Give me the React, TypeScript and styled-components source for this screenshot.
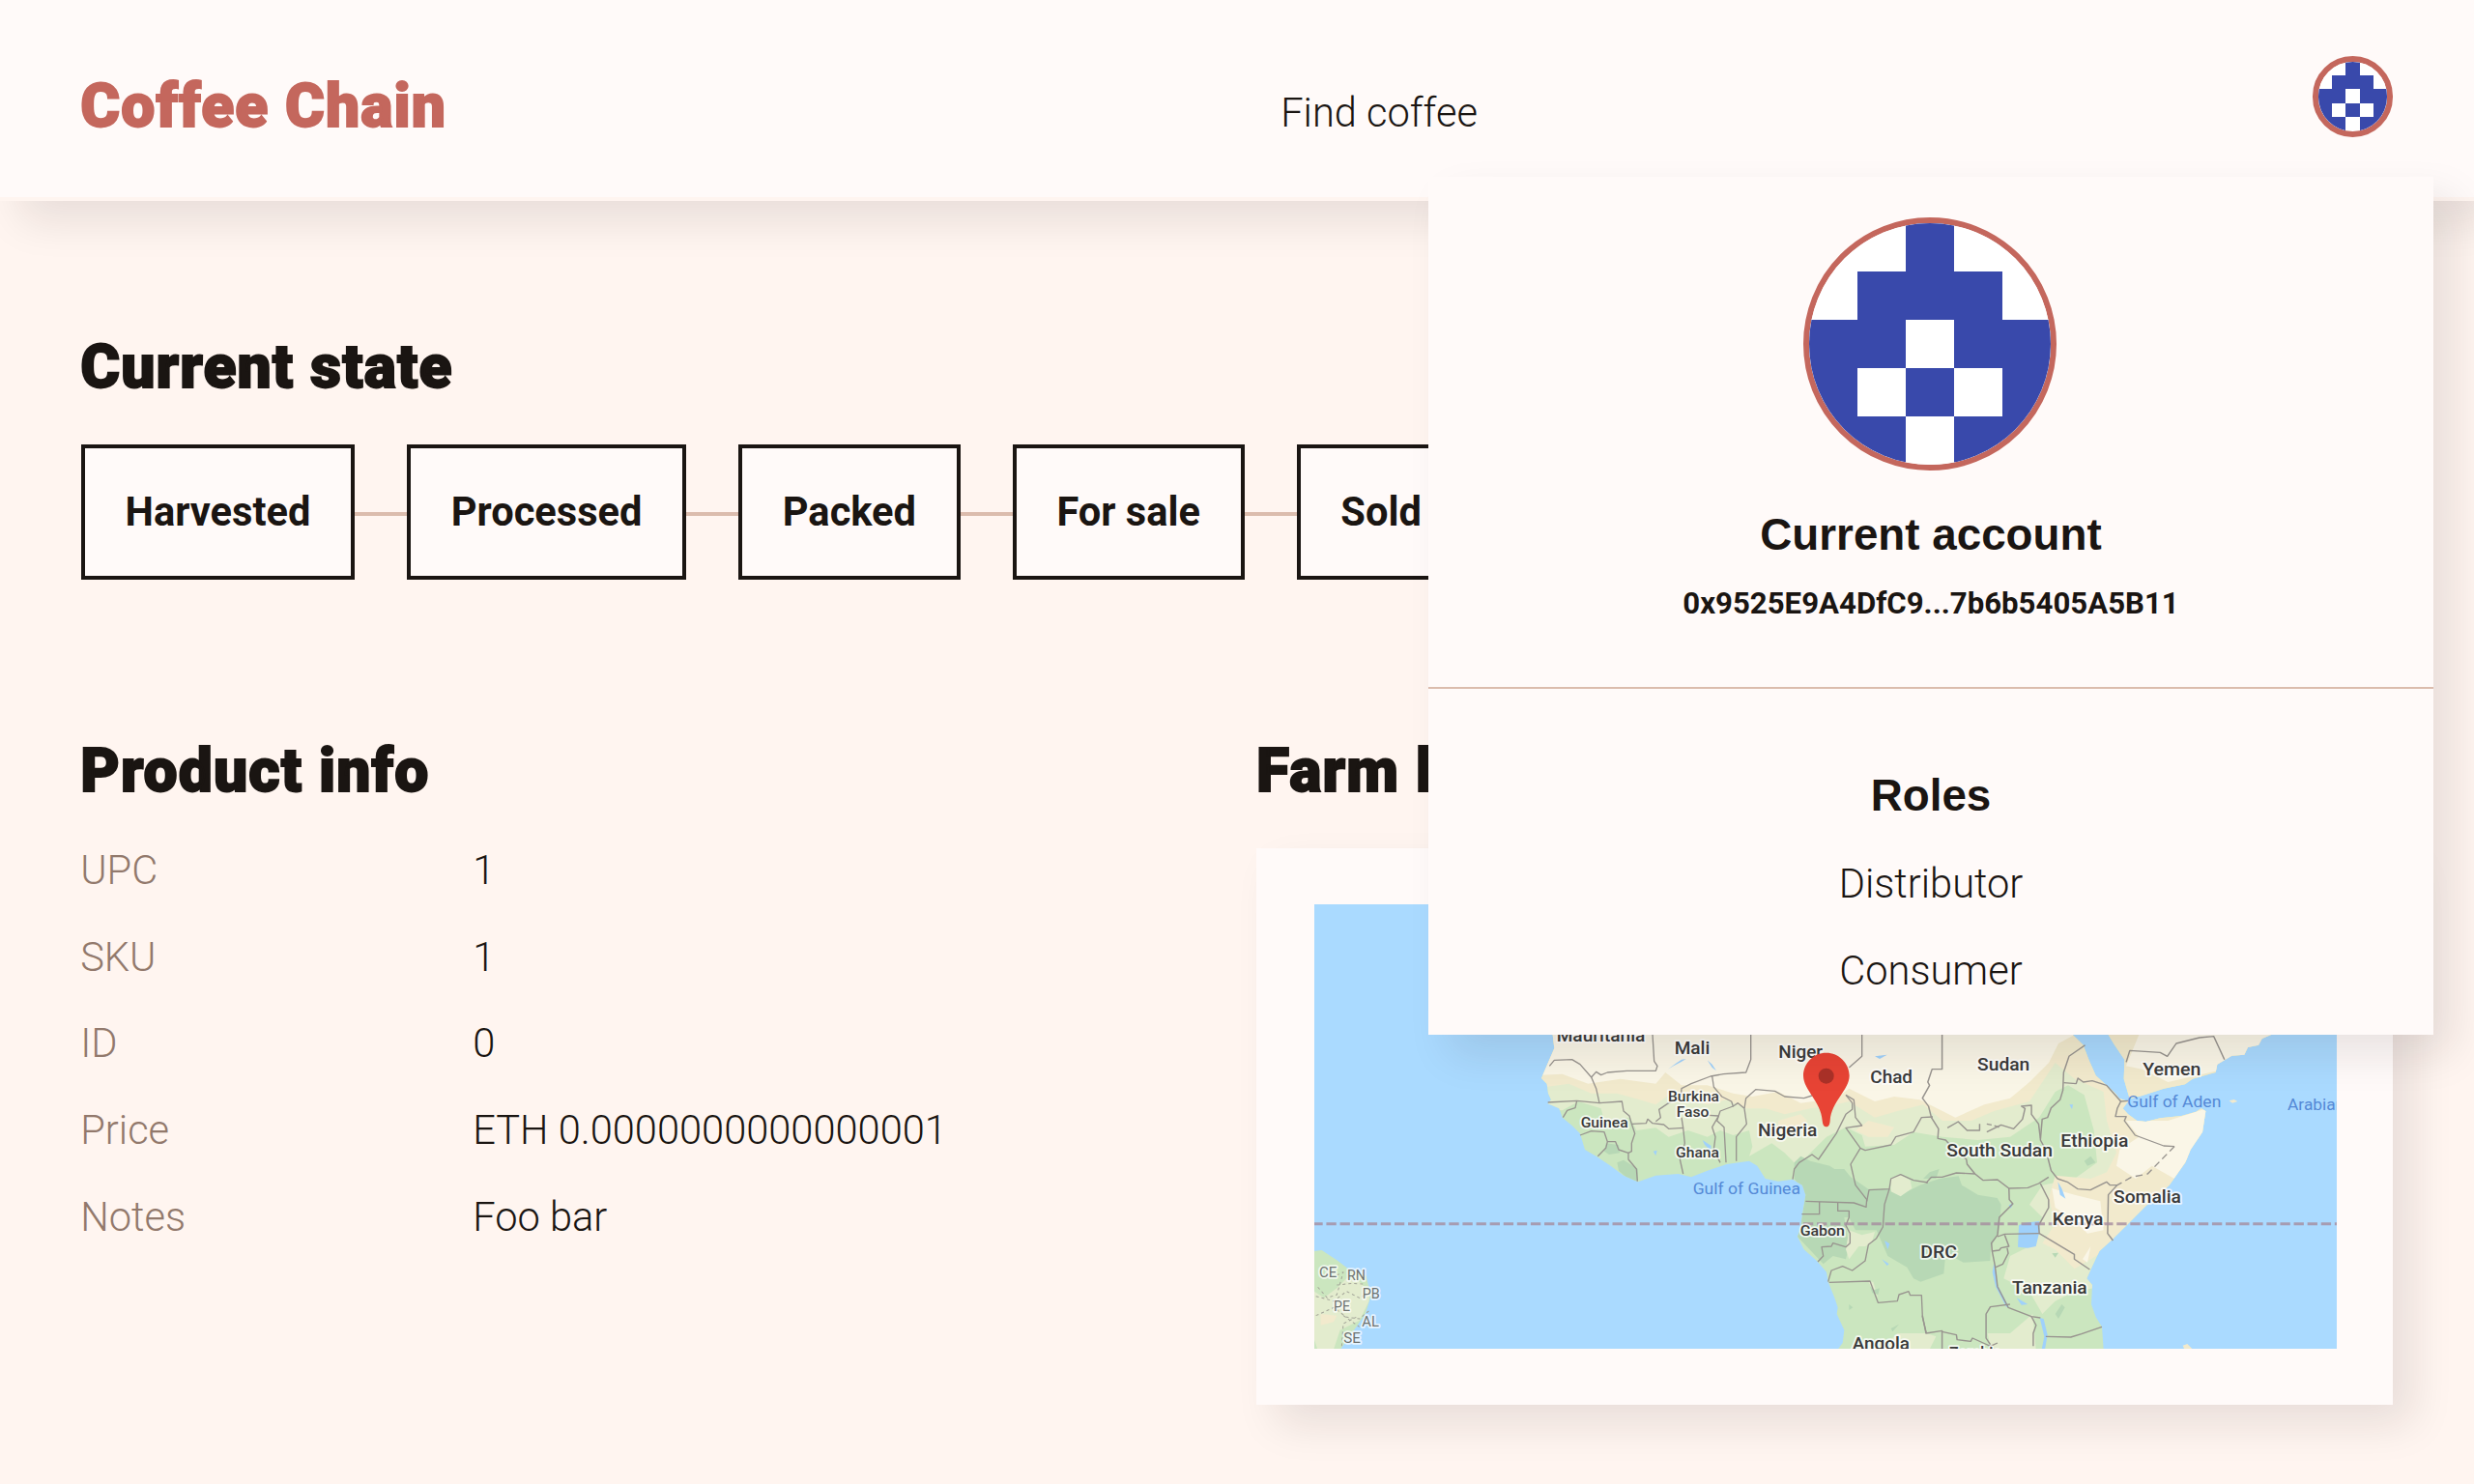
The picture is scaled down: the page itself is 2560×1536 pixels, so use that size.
import React from "react";
import styled, { createGlobalStyle } from "styled-components";

const ink = "#1a1512";
const rose = "#c4675d";
const line = "#dbbcad";
const paper = "#fffaf9";
const sand = "#fff5f0";
const shade = "20.8px 20.8px 41.6px rgba(26, 18, 20, 0.1)";

const GlobalStyle = createGlobalStyle`
  * { box-sizing: border-box; }
  body {
    margin: 0;
    background: ${sand};
    color: ${ink};
    font-family: Roboto, "Liberation Sans", sans-serif;
    font-size: 41.6px;
    font-weight: 300;
    line-height: 50px;
    overflow: hidden;
  }
`;

const Page = styled.div`
  position: relative;
  height: 1536px;
  overflow: hidden;
`;

const Header = styled.header`
  display: flex;
  align-items: flex-start;
  height: 208px;
  padding: 0 84px 0 83.2px;
  background: ${paper};
  border-bottom: 4px solid ${sand};
  box-shadow: ${shade};
`;

const Brand = styled.h1`
  width: 1242px;
  margin: 72px 0 0;
  color: ${rose};
  font-size: 62.4px;
  font-weight: 900;
  letter-spacing: 1.1px;
  line-height: 76px;
  -webkit-text-stroke: 1.8px ${rose};
`;

const NavLink = styled.a`
  margin-top: 92px;
`;

const AvatarFrame = styled.div<{ $size: number }>`
  width: ${(p) => p.$size}px;
  height: ${(p) => p.$size}px;
  border: 6px solid ${rose};
  border-radius: 50%;
  overflow: hidden;
  background: #fff;

  svg {
    display: block;
    width: 100%;
    height: 100%;
  }
`;

const HeaderAvatar = styled.div`
  margin: 58.4px 0 0 auto;
`;

const Main = styled.main`
  padding: 134px 84px 0 83.2px;
`;

const Heading = styled.h2`
  margin: 0 0 42px;
  font-size: 62.4px;
  font-weight: 900;
  letter-spacing: 1.1px;
  line-height: 76px;
  -webkit-text-stroke: 1.8px ${ink};
`;

const Steps = styled.ol`
  display: flex;
  align-items: center;
  margin: 0 0 160px 0.8px;
  padding: 0;
  list-style: none;
`;

const Step = styled.li`
  display: flex;
  align-items: center;

  & + &::before {
    content: "";
    width: 54.2px;
    height: 4px;
    margin-top: 4px;
    background: ${line};
  }
`;

const StepBox = styled.div`
  height: 140px;
  padding: 41px 41.6px;
  border: 4px solid ${ink};
  background: ${paper};
  font-weight: 700;
`;

const Columns = styled.div`
  display: grid;
  grid-template-columns: 1fr 1fr;
  gap: 40.8px;
`;

const InfoList = styled.dl`
  display: grid;
  grid-template-columns: 406px 1fr;
  row-gap: 39.6px;
  margin: -1.8px 0 0;
`;

const Label = styled.dt`
  color: #92796c;
`;

const Value = styled.dd`
  margin: 0;
`;

const MapCard = styled.div`
  padding: 58px 58px 58px 60px;
  background: ${paper};
  box-shadow: ${shade};
`;

const MapSvg = styled.svg`
  display: block;
  width: 100%;
  height: 460px;
  background: #aadaff;
  font-family: Roboto, sans-serif;
`;

const Popup = styled.aside`
  position: absolute;
  top: 183px;
  right: 42px;
  width: 1040px;
  height: 888px;
  background: ${paper};
  box-shadow: ${shade};
  text-align: center;
`;

const Account = styled.section`
  display: flex;
  flex-direction: column;
  align-items: center;
  height: 530px;
  padding-top: 42px;
  border-bottom: 2px solid ${line};
`;

const AccountAvatar = styled.div`
  margin-right: 2px;
`;

const PopupTitle = styled.h3`
  margin: 0;
  font-family: "Liberation Sans", Arial, sans-serif;
  font-size: 45.76px;
  font-weight: 700;
  line-height: 54px;
`;

const AccountTitle = styled(PopupTitle)`
  margin-top: 40px;
`;

const Address = styled.div`
  margin-top: 25px;
  font-size: 31.2px;
  font-weight: 700;
  line-height: 38px;
`;

const Roles = styled.section`
  padding-top: 84px;
`;

const Role = styled.div`
  margin-top: 39px;

  & + & {
    margin-top: 40px;
  }
`;

const Identicon = () => (
  <svg viewBox="0 0 5 5" shapeRendering="crispEdges">
    <rect width="5" height="5" fill="#fff" />
    <path
      fill="#3949ab"
      d="M2 0h1v1h1v1h1v3h-2v-1h-1v1h-2v-3h1v-1h1zM2 2v1h-1v1h1v-1h1v1h1v-1h-1v-1z"
      fillRule="evenodd"
    />
  </svg>
);

const land =
  "M95,-372L80,33L85,75L45,168L62,185L66,215L75,235L65,247L100,262L110,290L140,315L165,340L180,390L215,410L260,440L300,470L345,490L400,470L470,465L510,475L560,455L620,435L690,425L715,440L740,480L780,488L825,482L855,500L865,530L855,590L850,630L840,660L860,700L900,735L930,770L935,800L955,850L965,880L962,900L985,950L980,990L965,1010L1790,1010L1785,940L1766,910L1752,870L1755,810L1738,790L1749,765L1777,705L1816,670L1866,620L1921,565L1994,500L2044,430L2060,390L2097,335L2107,270L2093,262L2077,272L2032,285L1966,292L1921,303L1894,300L1866,280L1850,262L1866,240L1838,230L1827,215L1766,160L1744,110L1727,65L1694,33L1620,-372Z";
const arabia =
  "M1760,-372L1805,33L1821,60L1855,110L1853,170L1871,232L1910,222L1977,200L2043,187L2066,170L2138,150L2143,125L2188,98L2227,95L2238,72L2271,65L2282,45L2310,33L2400,-372Z";
const brazil =
  "M-660,705L-637,702L-588,734L-551,763L-500,780L-484,843L-502,901L-533,945L-579,1010L-660,1010Z";

const westBorders = [
  "70,130 85,112 140,110 165,125 200,165 215,200 225,245 155,238 65,243",
  "200,165 215,148 230,158 250,150 310,145 400,145 405,130 395,115 390,33",
  "695,33 695,110 680,150 610,155 570,162 510,185 480,200 478,225 440,245 410,265 415,290 400,302",
  "575,162 580,195 605,225 635,240 640,255 655,245 675,262",
  "640,255 600,270 590,300 612,320 618,430",
  "225,245 295,240 300,270 318,285 325,310 335,340 325,370 325,395 315,400 315,420 340,450 343,488",
  "325,310 370,308 375,295 390,308 425,312 440,325 485,322 490,370 475,420 485,465",
  "480,290 485,322",
  "565,283 595,285 575,320 585,350 580,390 600,430",
  "675,262 682,310 650,350 650,425",
  "675,262 680,230 710,203 770,208 800,225 860,230 885,222",
  "1040,33 1040,100 1000,135",
  "155,238 150,260 125,268 112,290",
  "165,345 200,332 240,335 250,365 245,385 220,410",
  "250,365 275,365 285,390 315,400",
  "990,220 1010,245 1010,265 990,280 960,340 905,420 885,405 845,430 830,450 825,482",
  "990,220 1015,235 1020,290 1040,315 990,322 1035,385 1005,435 1020,500 1055,545 1053,568 1015,555 865,550",
  "1035,385 1050,392 1130,375 1145,350 1200,335 1225,290 1260,288",
  "1055,550 1062,515 1125,512 1130,480 1160,467 1200,485 1245,492",
  "1125,512 1110,560 1105,630 1085,665 1060,685 1050,735 1010,765 980,752 945,765 935,800",
  "853,590 908,590 908,552",
  "965,555 965,580 1000,580 1000,600 990,625 1003,650 1003,680 990,692 950,680 945,690 915,692 920,720 903,738",
  "938,802 1065,798 1090,865 1150,860 1155,840 1185,830 1190,842 1225,842 1228,910 1240,960",
];

const eastBorders = [
  "80,33 80,140 52,140 40,180 45,190 25,230 42,255 50,290",
  "50,290 70,325 68,355 90,360 110,385 148,420 150,435 172,465",
  "95,322 125,303 150,330 185,330 185,310",
  "205,335 245,313 280,325 305,295 312,262 302,255 330,252 330,280 350,310 355,355",
  "480,65 435,100 420,150 418,205 410,235 385,260 375,290 360,295 355,360 370,390 385,455 403,480",
  "420,182 455,185 460,168 475,180 500,176 540,190 580,240 600,238",
  "580,240 570,262 565,287 595,287 590,300 620,345 700,378 730,380",
  "403,480 430,490 460,512 495,515 540,490 550,500 570,500 545,530 543,650 558,672",
  "35,493 50,475 80,475 120,462 172,465 195,485 235,483 267,510 320,508 350,495 378,475",
  "355,495 378,545 378,570 350,625 352,650 450,715 450,730 493,762",
  "267,510 268,545 278,558 240,600 235,655 218,680 220,705 228,750 235,815 265,880 330,908 355,912",
  "352,650 255,652 235,660",
  "255,655 267,690 245,695 240,702 220,705",
  "262,695 265,712 250,745 230,755",
  "25,905 35,960 80,952 80,1008",
  "80,955 120,965 122,980 160,985 165,975 195,990 215,1000 235,990",
  "270,870 215,878 203,900 203,975 215,995",
  "330,908 343,935 335,960 335,1000",
  "370,970 440,972 470,962 527,940",
  "595,118 605,82 690,88 710,100 735,60 800,42 840,38 870,110",
];

type Place = [name: string, x: number, y: number, width: number, size: number];

const countries: Place[] = [
  ["Mauritania", 92, 55, 275, 54],
  ["Mali", 458, 94, 110, 54],
  ["Niger", 781, 104, 137, 54],
  ["Chad", 1066, 183, 131, 54],
  ["Burkina", 438, 240, 159, 46],
  ["Faso", 464, 288, 101, 46],
  ["Guinea", 167, 320, 147, 46],
  ["Ghana", 462, 414, 135, 46],
  ["Nigeria", 717, 348, 184, 54],
  ["Gabon", 848, 658, 139, 46],
  ["Angola", 1010, 1012, 178, 54],
  ["DRC", 1222, 725, 113, 54],
  ["Sudan", 1398, 143, 163, 54],
  ["Yemen", 1912, 158, 180, 54],
  ["Ethiopia", 1657, 380, 210, 54],
  ["South Sudan", 1303, 412, 329, 54],
  ["Somalia", 1821, 555, 210, 54],
  ["Kenya", 1631, 624, 158, 54],
  ["Tanzania", 1506, 836, 233, 54],
  ["Zambia", 1311, 1042, 162, 54],
];

const states: Place[] = [
  ["CE", -645, 785, 55, 46],
  ["RN", -558, 795, 57, 46],
  ["PB", -511, 853, 54, 46],
  ["PE", -600, 890, 51, 46],
  ["AL", -512, 939, 53, 46],
  ["SE", -569, 991, 53, 46],
];

const waters: Place[] = [
  ["Gulf of Guinea", 515, 527, 334, 52],
  ["Gulf of Aden", 1864, 258, 291, 52],
  ["Arabian Sea", 2361, 268, 278, 52],
];

const Names = ({ items }: { items: Place[] }) => (
  <>
    {items.map(([name, x, y, width, size]) => (
      <text key={name} x={x} y={y} fontSize={size} textLength={width} lengthAdjust="spacingAndGlyphs">
        {name}
      </text>
    ))}
  </>
);

const FarmMap = () => (
  <MapSvg viewBox="-660 -372 3174 1380" preserveAspectRatio="none">
    <defs>
      <clipPath id="land">
        <path d={land + arabia + brazil} />
      </clipPath>
    </defs>
    <g clipPath="url(#land)">
      <rect x="-660" y="-372" width="3174" height="1382" fill="#cbe6bf" />
      <path
        fill="#e3ecce"
        d="M0,-372V262L110,268L160,240L230,262L240,300L320,290L340,330L400,322L440,350L500,330L560,350L600,330L640,345L690,330L700,380L690,410L760,370L800,400L840,440L880,400L930,350L990,320L1040,345L1050,380L1140,375L1200,335L1290,350L1400,360L1500,350L1560,310L1590,290L1640,210L1680,190L1730,220L1760,330L1770,430L1700,480L1600,500L1560,560L1600,600L1590,640L1560,690L1500,720L1480,790L1560,830L1600,900L1640,860L1700,830L1760,820L1900,700L2200,300L2514,200V-372Z"
      />
      <path
        fill="#f2eacd"
        d="M0,-372V190L60,195L130,185L200,215L280,215L350,235L400,250L440,220L560,250L620,235L680,262L740,262L800,280L880,262L960,250L1000,240L1080,290L1150,270L1230,250L1290,300L1380,300L1450,270L1560,240L1600,180L1640,120L1700,170L1790,210L1800,300L1830,400L1800,460L1750,480L1640,470L1620,540L1640,620L1600,680L1640,700L1700,760L1750,730L1900,640L1960,540L2200,300L2514,200V-372Z"
      />
      <path
        fill="#faf6e7"
        d="M0,-372V160L110,155L190,185L290,170L400,185L430,150L480,190L560,190L640,215L700,225L780,210L850,245L960,230L1000,200L1080,240L1140,225L1220,235L1290,270L1330,290L1420,250L1500,230L1560,180L1620,120L1650,60L1700,33L1900,33L1860,130L1910,140L1990,180L2514,60V-372Z"
      />
      <path
        fill="#faf6e7"
        d="M1860,300L1900,350L1840,390L1830,440L1890,480L1940,440L2010,480L2050,420L2110,340V262L1990,300ZM1630,510L1700,530L1780,550L1790,640L1740,650L1690,600L1640,570ZM1750,690L1740,740L1725,730Z"
      />
      <path
        fill="#b7d8b5"
        d="M830,430L850,410L880,425L940,440L955,450L985,450L1005,475L1060,512L1125,512L1160,530L1220,500L1280,480L1340,472L1350,500L1400,530L1460,540L1472,560L1465,650L1440,690L1438,735L1355,740L1300,710L1294,775L1222,800L1200,790L1180,755L1120,720L1085,640L1020,640L1000,600L985,600L1000,690L990,730L950,720L920,745L840,660L855,590L865,530L830,480ZM245,370L285,375L288,400L255,405L240,395ZM280,430L300,422L345,450L345,488L320,485L285,455ZM1730,425L1750,410L1765,430L1740,440ZM1640,900L1660,870L1670,880L1650,915ZM1250,460L1280,450L1270,480L1230,480Z"
      />
      <path
        fill="#e3ecce"
        d="M1000,640L1040,655L1080,645L1070,680L1050,690L1030,690L1000,730L990,700ZM1130,480L1160,468L1190,485L1195,510L1160,535L1130,520ZM1060,800L1075,800L1090,850ZM1240,960L1270,970L1250,1010H1100L1150,960ZM1430,960L1500,960L1570,900L1580,1010H1440ZM-660,830L-630,850L-590,820L-560,790L-520,800L-490,830L-490,860L-520,920L-580,950L-600,1010H-650L-660,980Z"
      />
      <path fill="#f2eacd" d="M-640,900L-590,905L-600,925L-640,935ZM780,300L850,280L870,300L820,330L780,330ZM1020,330L1060,300L1140,320L1120,350L1060,350Z" />
      <path fill="#b7d8b5" d="M1065,815L1078,825L1095,820L1090,840L1072,835ZM1130,945L1155,932L1135,955ZM1000,870L1012,880L1000,888ZM1630,712L1650,710L1640,725Z" />
    </g>
    <g fill="#9fd1fb">
      <path d="M438,140L462,122L480,110L494,108L478,118L455,130ZM560,112L575,125L588,145L575,135ZM545,360L572,378L570,392L552,375ZM392,395L404,392L400,408ZM1110,672L1126,682L1120,700ZM1102,730L1124,745L1118,750Z" />
      <path d="M1527,625L1545,617L1590,612L1592,640L1580,690L1555,695L1524,692ZM1648,490L1660,510L1672,542L1655,530ZM1684,250L1695,250L1692,264ZM1520,850L1555,870L1535,872ZM1080,100L1118,95L1095,108Z" />
      <path d="M1450,742L1462,812L1496,878L1488,878L1455,815L1445,770ZM1592,912L1604,915L1616,965L1608,1010H1598L1606,970ZM1496,562L1510,556L1502,572Z" />
    </g>
    <path d="M2036,998L2050,993L2065,1008H2040ZM2180,238L2195,234L2206,240L2190,245Z" fill="#f2eacd" />
    <g fill="none" stroke="#98948f" strokeWidth="4" strokeLinejoin="round">
      {westBorders.map((points) => (
        <polyline key={points} points={points} />
      ))}
      <g transform="translate(1200 0) scale(1.1097 1)">
        {eastBorders.map((points) => (
          <polyline key={points} points={points} />
        ))}
        <polyline points="730,380 655,465 610,475 570,500" strokeDasharray="20 12" />
        <polyline points="205,310 225,315 245,323" strokeDasharray="14 8" />
      </g>
      <path
        d="M-590,780L-570,770L-590,840L-620,850L-655,810M-590,810L-540,805L-500,808M-655,845L-600,860L-560,830L-520,850L-490,835M-655,905L-600,880L-560,910L-520,915L-490,890M-575,1000L-570,930L-530,910M-570,905L-520,940"
        strokeDasharray="9 9"
        strokeWidth="3"
        stroke="#a3a498"
      />
    </g>
    <path
      d="M-660,620H2514"
      stroke="#a58c9f"
      strokeOpacity="0.8"
      strokeWidth="9"
      strokeDasharray="31 11.3"
      strokeDashoffset="5"
    />
    <g fill="#3a3a3a" stroke="#fff" strokeOpacity="0.75" strokeWidth="11" strokeLinejoin="round" paintOrder="stroke" fontWeight="500">
      <Names items={countries} />
    </g>
    <g fill="#6d7270" stroke="#fff" strokeOpacity="0.7" strokeWidth="11" strokeLinejoin="round" paintOrder="stroke" fontWeight="400">
      <Names items={states} />
    </g>
    <g fill="#5489d6" fontWeight="400">
      <Names items={waters} />
    </g>
    <path
      d="M929,89C968,89 1001,121 1001,160C1001,205 945,240 941,300C940,313 936,319 929,319C922,319 918,313 917,300C913,240 858,205 858,160C858,121 890,89 929,89Z"
      fill="#e84435"
    />
    <circle cx="929" cy="161" r="24" fill="#ab3128" />
  </MapSvg>
);

const steps = ["Harvested", "Processed", "Packed", "For sale", "Sold"];

const info = [
  ["UPC", "1"],
  ["SKU", "1"],
  ["ID", "0"],
  ["Price", "ETH 0.0000000000000001"],
  ["Notes", "Foo bar"],
];

export default function App() {
  return (
    <Page>
      <GlobalStyle />
      <Header>
        <Brand>Coffee Chain</Brand>
        <NavLink>Find coffee</NavLink>
        <HeaderAvatar>
          <AvatarFrame $size={83.2}>
            <Identicon />
          </AvatarFrame>
        </HeaderAvatar>
      </Header>
      <Main>
        <Heading>Current state</Heading>
        <Steps>
          {steps.map((step) => (
            <Step key={step}>
              <StepBox>{step}</StepBox>
            </Step>
          ))}
        </Steps>
        <Columns>
          <section>
            <Heading>Product info</Heading>
            <InfoList>
              {info.map(([label, value]) => (
                <React.Fragment key={label}>
                  <Label>{label}</Label>
                  <Value>{value}</Value>
                </React.Fragment>
              ))}
            </InfoList>
          </section>
          <section>
            <Heading>Farm location</Heading>
            <MapCard>
              <FarmMap />
            </MapCard>
          </section>
        </Columns>
      </Main>
      <Popup>
        <Account>
          <AccountAvatar>
            <AvatarFrame $size={262}>
              <Identicon />
            </AvatarFrame>
          </AccountAvatar>
          <AccountTitle>Current account</AccountTitle>
          <Address>0x9525E9A4DfC9...7b6b5405A5B11</Address>
        </Account>
        <Roles>
          <PopupTitle>Roles</PopupTitle>
          <Role>Distributor</Role>
          <Role>Consumer</Role>
        </Roles>
      </Popup>
    </Page>
  );
}
